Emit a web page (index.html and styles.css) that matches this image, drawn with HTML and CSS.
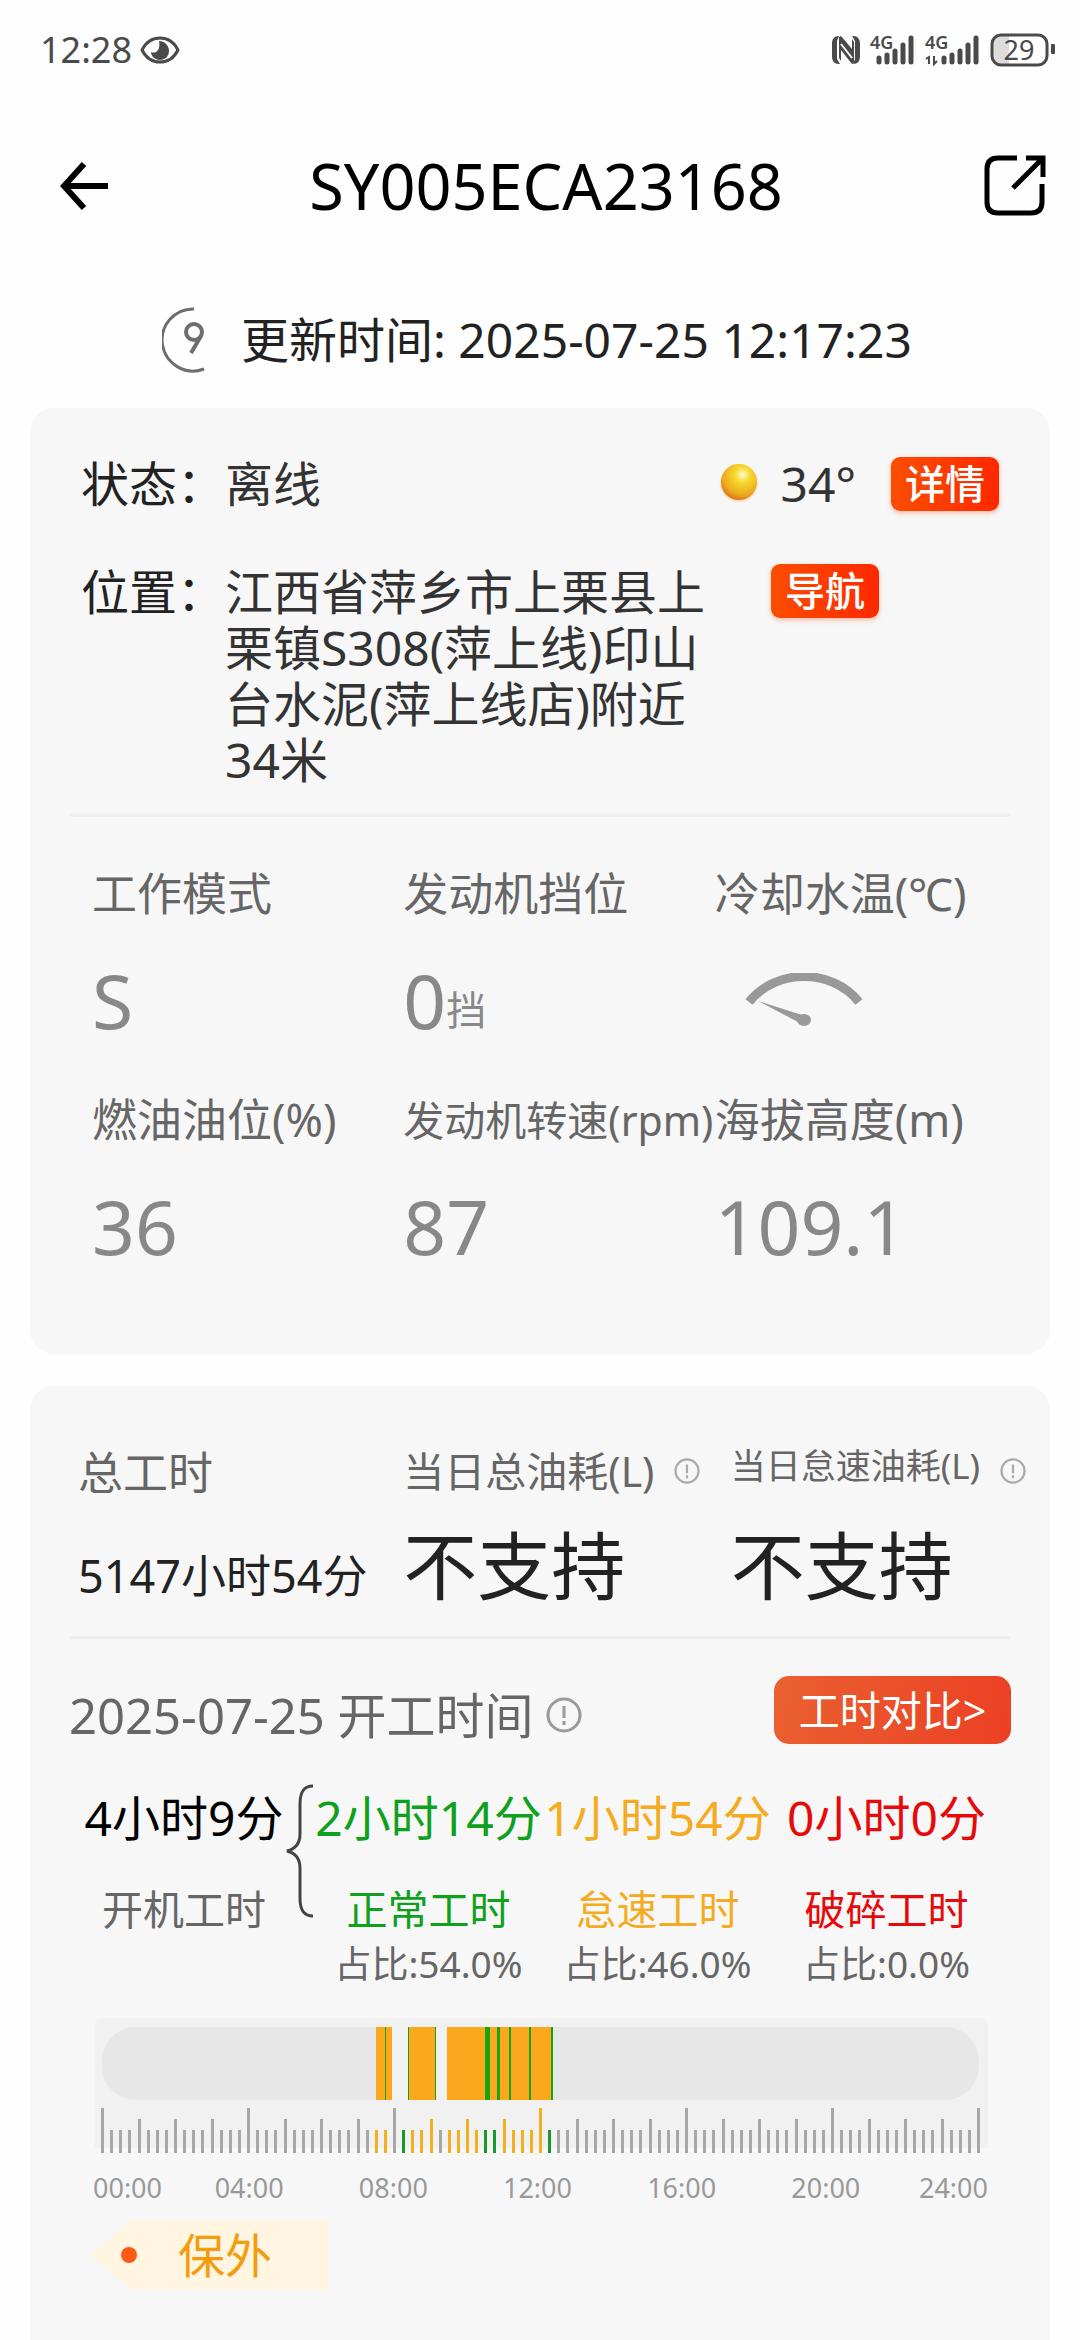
FILE: index.html
```html
<!DOCTYPE html>
<html lang="zh-CN">
<head>
<meta charset="utf-8">
<meta name="viewport" content="width=device-width, initial-scale=1">
<title>SY005ECA23168</title>
<link rel="stylesheet" href="styles.css">
</head>
<body>
<div class="status-bar">
  <div class="status-left">
    <span class="clock">12:28</span>
    <svg width="40" height="28" viewBox="0 0 40 28" aria-hidden="true">
      <path d="M2 14C10 -2 30 -2 38 14C30 30 10 30 2 14Z" fill="none" stroke="#4a4a4a" stroke-width="3" stroke-linejoin="round"/>
      <path d="M19 5C24 5 29 9 29 15C29 20 25 24 20 24C15 24 11 20 11 16C15 18 21 15 19 5Z" fill="#4a4a4a"/>
    </svg>
  </div>
  <div class="status-right">
    <svg width="28" height="30" viewBox="0 0 28 30" aria-hidden="true">
      <path fill="#4a4a4a" d="M7 1L5 6V24L8 29H7C2 29 0 26 0 21V9C0 4 2 1 7 1ZM21 29L23 24V6L20 1H21C26 1 28 4 28 9V21C28 26 26 29 21 29Z"/>
      <path fill="#4a4a4a" d="M7 2L9 1L20 14V4L22 7V27L20 29L9 15V26L7 23Z"/>
      <path d="M8 3L21 19M8 11L21 28" stroke="#4a4a4a" stroke-width="2"/>
      <path d="M9 9L20 23" stroke="#fefefe" stroke-width="2"/>
    </svg>
    <svg width="45" height="44" viewBox="0 -6 45 44" aria-hidden="true">
      <text class="net" x="0" y="15">4G</text>
      <path d="M9 24V28M17 21V28M25 17V28M33 11V28M41 4V28" stroke="#4a4a4a" stroke-width="5" stroke-linecap="round"/>
    </svg>
    <svg width="55" height="44" viewBox="0 -6 55 44" aria-hidden="true">
      <text class="net" x="0" y="15">4G</text>
      <path d="M4 30V23L1 25M9 22V30L12 27" fill="none" stroke="#4a4a4a" stroke-width="2"/>
      <path d="M19 24V28M27 21V28M35 17V28M43 11V28M51 4V28" stroke="#4a4a4a" stroke-width="5" stroke-linecap="round"/>
    </svg>
    <svg width="65" height="46" viewBox="0 -6 65 46" aria-hidden="true">
      <path d="M10 2H19V32H10Q2 32 2 24V10Q2 2 10 2Z" fill="#dcdcdc"/>
      <rect x="2" y="2" width="55" height="30" rx="9" fill="none" stroke="#4a4a4a" stroke-width="3"/>
      <rect x="61" y="11" width="4" height="10" rx="1" fill="#4a4a4a"/>
      <text class="battery" x="29" y="27" text-anchor="middle">29</text>
    </svg>
  </div>
</div>

<header class="header">
  <button class="icon-button" aria-label="返回">
    <svg width="48" height="48" viewBox="0 0 48 48"><path d="M24 2L4 24L24 46M4 24H48" fill="none" stroke="#000" stroke-width="6"/></svg>
  </button>
  <h1 class="title">SY005ECA23168</h1>
  <button class="icon-button" aria-label="分享">
    <svg width="62" height="62" viewBox="0 0 62 62"><path d="M33 3H14Q3 3 3 14V47Q3 58 14 58H47Q58 58 58 47V29M42 3H59V22M58 4L29 33" fill="none" stroke="#000" stroke-width="5"/></svg>
  </button>
</header>

<div class="update">
  <svg width="50" height="66" viewBox="0 0 50 66" aria-hidden="true">
    <path d="M32 2A31 31 0 1 0 42 62" fill="none" stroke="#6e6e6e" stroke-width="3"/>
    <circle cx="32" cy="25" r="8" fill="none" stroke="#6e6e6e" stroke-width="4"/>
    <path d="M39 29L29 46" stroke="#6e6e6e" stroke-width="4"/>
  </svg>
  <span>更新时间: 2025-07-25 12:17:23</span>
</div>

<main class="content">
<section class="card state-card">
  <div class="info-row">
    <span class="info-label">状态：</span>
    <span class="info-value">离线</span>
    <div class="weather">
      <svg width="40" height="40" viewBox="0 0 40 40" aria-hidden="true">
        <defs>
          <radialGradient id="sun" cx="0.6" cy="0.3" r="0.7"><stop offset="0" stop-color="#fffbd0"/><stop offset="0.3" stop-color="#f7d92f"/><stop offset="0.8" stop-color="#eca81c"/><stop offset="1" stop-color="#e2781c"/></radialGradient>
          <radialGradient id="glow"><stop offset="0.8" stop-color="#f7c98a"/><stop offset="1" stop-color="#f7f7f7"/></radialGradient>
        </defs>
        <circle cx="20" cy="19" r="20" fill="url(#glow)"/>
        <circle cx="20" cy="18" r="18" fill="url(#sun)"/>
      </svg>
      <span>34°</span>
      <button class="tag-button">详情</button>
    </div>
  </div>
  <div class="info-row">
    <span class="info-label">位置：</span>
    <span class="info-value address">江西省萍乡市上栗县上栗镇S308(萍上线)印山台水泥(萍上线店)附近34米</span>
    <button class="tag-button">导航</button>
  </div>
  <hr class="divider">
  <div class="metrics">
    <div class="metric"><span class="metric-label">工作模式</span><span class="metric-value">S</span></div>
    <div class="metric"><span class="metric-label">发动机挡位</span><span class="metric-value">0<small>挡</small></span></div>
    <div class="metric"><span class="metric-label">冷却水温(℃)</span>
      <span class="metric-value gauge">
        <svg width="120" height="54" viewBox="0 0 120 54" role="img" aria-label="水温表">
          <path d="M5 29C32 -5 88 -5 115 29" fill="none" stroke="#999" stroke-width="9"/>
          <path d="M14 28L58 42L54 49Z" fill="#999"/>
          <ellipse cx="60" cy="47" rx="7" ry="6" fill="#999"/>
        </svg>
      </span>
    </div>
    <div class="metric"><span class="metric-label">燃油油位(%)</span><span class="metric-value">36</span></div>
    <div class="metric"><span class="metric-label compact">发动机转速(rpm)</span><span class="metric-value">87</span></div>
    <div class="metric"><span class="metric-label">海拔高度(m)</span><span class="metric-value">109.1</span></div>
  </div>
</section>

<section class="card work-card">
  <div class="totals">
    <div class="total">
      <div class="total-label">总工时</div>
      <div class="total-value hours">5147小时54分</div>
    </div>
    <div class="total">
      <div class="total-label medium"><span>当日总油耗(L)</span>
        <svg class="hint" width="26" height="26" viewBox="0 0 36 36"><circle cx="18" cy="18" r="16" fill="none" stroke="#aaa" stroke-width="3"/><path d="M18 9V21M18 24V28" stroke="#aaa" stroke-width="3"/></svg>
      </div>
      <div class="total-value">不支持</div>
    </div>
    <div class="total">
      <div class="total-label small"><span>当日怠速油耗(L)</span>
        <svg class="hint" width="26" height="26" viewBox="0 0 36 36"><circle cx="18" cy="18" r="16" fill="none" stroke="#aaa" stroke-width="3"/><path d="M18 9V21M18 24V28" stroke="#aaa" stroke-width="3"/></svg>
      </div>
      <div class="total-value">不支持</div>
    </div>
  </div>
  <hr class="divider">
  <div class="work-head">
    <div class="work-caption">
      <h2 class="work-title">2025-07-25 开工时间</h2>
      <svg class="hint" width="36" height="36" viewBox="0 0 36 36"><circle cx="18" cy="18" r="16" fill="none" stroke="#999" stroke-width="3"/><path d="M18 9V21M18 24V28" stroke="#999" stroke-width="3"/></svg>
    </div>
    <button class="compare-button">工时对比&gt;</button>
  </div>

  <div class="breakdown">
    <div class="part total-part"><span class="part-time">4小时9分</span><span class="part-name">开机工时</span></div>
    <svg class="brace" width="28" height="134" viewBox="0 0 28 134" aria-hidden="true"><path d="M27 2C17 2 14 9 14 20V50C14 60 9 65 1 67C9 69 14 74 14 84V114C14 125 17 132 27 132" fill="none" stroke="#444" stroke-width="3"/></svg>
    <div class="part normal"><span class="part-time">2小时14分</span><span class="part-name">正常工时</span><span class="part-share">占比:54.0%</span></div>
    <div class="part idle"><span class="part-time">1小时54分</span><span class="part-name">怠速工时</span><span class="part-share">占比:46.0%</span></div>
    <div class="part breaker"><span class="part-time">0小时0分</span><span class="part-name">破碎工时</span><span class="part-share">占比:0.0%</span></div>
  </div>

  <div class="timeline">
    <div class="track" id="track"></div>
    <div class="ticks" id="ticks"></div>
  </div>
  <div class="hours-axis">
    <span>00:00</span><span>04:00</span><span>08:00</span><span>12:00</span><span>16:00</span><span>20:00</span><span>24:00</span>
  </div>
  <div class="warranty"><i class="dot"></i><span>保外</span></div>
</section>
</main>
<script src="script.js"></script>
</body>
</html>
```
FILE: styles.css
```css
* {
  box-sizing: border-box;
}

body {
  margin: 0;
  min-height: 100vh;
  display: flex;
  flex-direction: column;
  background: #fefefe;
  color: #222;
  font-family: "Noto Sans", "Noto Sans CJK SC", sans-serif;
  font-size: 48px;
  line-height: 56px;
}

button {
  border: 0;
  padding: 0;
  font-family: inherit;
  cursor: pointer;
}

svg {
  display: block;
  flex: none;
}

h1,
h2 {
  margin: 0;
  font-weight: 400;
}

.status-bar {
  height: 100px;
  padding: 0 25px 0 40px;
  display: flex;
  align-items: center;
  justify-content: space-between;
  color: #4a4a4a;
}

.status-left {
  display: flex;
  align-items: center;
  gap: 8px;
}

.clock {
  font-size: 36px;
}

.status-right {
  display: flex;
  align-items: center;
  gap: 10px;
}

.net {
  font-size: 18px;
  font-weight: 600;
  fill: #4a4a4a;
}

.battery {
  font-size: 27px;
  fill: #4a4a4a;
}

.header {
  height: 172px;
  padding: 0 34px 0 60px;
  display: flex;
  align-items: center;
  justify-content: space-between;
}

.icon-button {
  background: none;
}

.title {
  font-size: 63px;
  line-height: 72px;
  color: #000;
}

.update {
  height: 136px;
  padding-left: 162px;
  display: flex;
  align-items: center;
  gap: 29px;
}

.content {
  flex: 1;
  display: flex;
  flex-direction: column;
  gap: 32px;
  padding: 0 30px;
}

.card {
  background: #f7f7f7;
  border-radius: 24px;
}

.state-card {
  padding: 48px 0 88px;
}

.info-row {
  display: flex;
  align-items: flex-start;
  padding: 0 51px;
}

.info-row + .info-row {
  margin-top: 52px;
}

.info-label {
  flex: none;
  width: 144px;
}

.info-value {
  color: #333;
}

.address {
  width: 54%;
  max-width: 490px;
  margin-right: 56px;
}

.weather {
  margin-left: auto;
  display: flex;
  align-items: center;
  color: #333;
}

.weather span {
  margin: 0 35px 0 22px;
}

.tag-button {
  flex: none;
  width: 108px;
  height: 54px;
  border-radius: 9px;
  background: linear-gradient(90deg, #fa4e00, #ff2800);
  box-shadow: 0 2px 5px rgba(255, 90, 40, 0.4);
  color: #fff;
  font-size: 40px;
  font-weight: 500;
  line-height: 54px;
}

.divider {
  height: 3px;
  margin: 26px 40px 0;
  border: 0;
  background: #efefef;
}

.metrics {
  display: grid;
  grid-template-columns: repeat(3, 1fr);
  row-gap: 50px;
  padding: 47px 24px 0 62px;
}

.metric {
  display: flex;
  flex-direction: column;
  gap: 36px;
  white-space: nowrap;
}

.metric-label {
  font-size: 45px;
  line-height: 60px;
  color: #666;
}

.metric-label.compact {
  font-size: 41px;
}

.metric-value {
  height: 80px;
  font-size: 75px;
  line-height: 80px;
  color: #888;
}

.metric-value small {
  font-size: 40px;
  line-height: 40px;
  vertical-align: 4px;
}

.gauge {
  display: flex;
  align-items: center;
  padding-left: 29px;
}

.work-card {
  flex: 1;
  padding: 55px 0 24px;
  border-bottom-left-radius: 0;
  border-bottom-right-radius: 0;
}

.totals {
  display: grid;
  grid-template-columns: 325fr 327fr 319fr;
  padding-left: 48px;
  white-space: nowrap;
}

.total-label {
  display: flex;
  align-items: center;
  gap: 20px;
  height: 64px;
  font-size: 45px;
  color: #666;
}

.total-label.medium {
  height: 60px;
  font-size: 41px;
}

.total-label.small {
  height: 60px;
  font-size: 35px;
}

.total-label.small span {
  padding-bottom: 10px;
}

.total-value {
  margin-top: 20px;
  font-size: 74px;
  line-height: 90px;
}

.total-value.hours {
  font-size: 45px;
  line-height: 102px;
}

.totals + .divider {
  margin-top: 9px;
}

.work-head {
  display: flex;
  align-items: center;
  justify-content: space-between;
  margin-top: 37px;
  padding: 0 39px;
}

.work-caption {
  display: flex;
  align-items: center;
  gap: 12px;
  padding-top: 10px;
}

.work-title {
  font-size: 49px;
  color: #666;
}

.compare-button {
  width: 237px;
  height: 68px;
  border-radius: 15px;
  background: linear-gradient(100deg, #ea6030, #ec4024);
  color: #fff;
  font-size: 41px;
  line-height: 68px;
}

.breakdown {
  display: grid;
  grid-template-columns: 204fr 28px repeat(3, 229fr);
  margin-top: 44px;
  padding: 0 49px 0 52px;
  white-space: nowrap;
}

.brace {
  margin-top: -4px;
}

.part {
  display: flex;
  flex-direction: column;
  align-items: center;
}

.part-time {
  line-height: 60px;
}

.part-name {
  margin-top: 36px;
  font-size: 41px;
  line-height: 50px;
}

.part-share {
  margin-top: 5px;
  font-size: 37px;
  line-height: 50px;
  color: #666;
}

.total-part .part-time {
  color: #000;
}

.total-part .part-name {
  color: #666;
}

.normal {
  color: #0fa01c;
}

.idle {
  color: #f5ab20;
}

.breaker {
  color: #e60a0a;
}

.timeline {
  margin: 29px 62px 0 65px;
  padding: 9px 8px 0 6px;
  border-radius: 6px;
  background: linear-gradient(#f1f1f1 130px, #f7f7f7 130px);
}

.track {
  display: flex;
  height: 73px;
  margin: 0 1px;
  border-radius: 34px;
  overflow: hidden;
}

.track span {
  flex-basis: 0;
}

.track .empty {
  background: #e7e7e7;
}

.track .run-idle {
  background: #fca81c;
}

.track .run-normal {
  background: #14a50c;
}

.ticks {
  display: flex;
  align-items: flex-end;
  justify-content: space-between;
  height: 45px;
  margin-top: 8px;
}

.tick {
  width: 3px;
  height: 23px;
  background: #a6a6a6;
}

.tick.hour {
  height: 34px;
}

.tick.major {
  height: 45px;
}

.tick.tick-idle {
  background: #f5b021;
}

.tick.tick-normal {
  background: #1b982a;
}

.hours-axis {
  display: grid;
  grid-template-columns: 84fr repeat(5, 144fr) 90fr;
  margin: 17px 62px 0 63px;
  font-size: 27px;
  line-height: 36px;
  color: #999;
  text-align: center;
}

.hours-axis span:first-child {
  text-align: left;
}

.hours-axis span:last-child {
  text-align: right;
}

.warranty {
  display: flex;
  align-items: center;
  width: 238px;
  height: 70px;
  margin: 14px 0 0 60px;
  padding-left: 31px;
  background: #fff5e0;
  clip-path: polygon(0 50%, 14% 10%, 18% 0, 100% 0, 100% 100%, 18% 100%, 14% 90%);
  font-size: 47px;
  color: #f39c0c;
}

.dot {
  width: 16px;
  height: 16px;
  margin-right: 41px;
  border-radius: 50%;
  background: #ff5a14;
}
```
FILE: script.js
```js
// Day timeline: [kind, length]; lengths share one unit across the whole day.
const runs = [
  ["empty", 274], ["run-idle", 9], ["run-normal", 1], ["run-idle", 6], ["off", 16],
  ["run-normal", 1], ["run-idle", 26], ["run-normal", 1], ["off", 11],
  ["run-idle", 38], ["run-normal", 5], ["run-idle", 7], ["run-normal", 3],
  ["run-idle", 9], ["run-normal", 2], ["run-idle", 18], ["run-normal", 2],
  ["run-idle", 20], ["run-normal", 2], ["empty", 426]
];

const track = document.getElementById("track");
for (const [kind, length] of runs) {
  const span = document.createElement("span");
  span.className = kind;
  span.style.flexGrow = length;
  track.append(span);
}

// One tick per quarter hour.
const idle = [30, 31, 34, 35, 36, 38, 39, 40, 41, 44, 45, 46, 47, 48];
const normal = [33, 42, 43, 49];
const ticks = document.getElementById("ticks");
for (let i = 0; i <= 96; i++) {
  const tick = document.createElement("i");
  tick.className = "tick";
  if (i % 16 === 0) tick.classList.add("major");
  else if (i % 4 === 0) tick.classList.add("hour");
  if (idle.includes(i)) tick.classList.add("tick-idle");
  if (normal.includes(i)) tick.classList.add("tick-normal");
  ticks.append(tick);
}
```
